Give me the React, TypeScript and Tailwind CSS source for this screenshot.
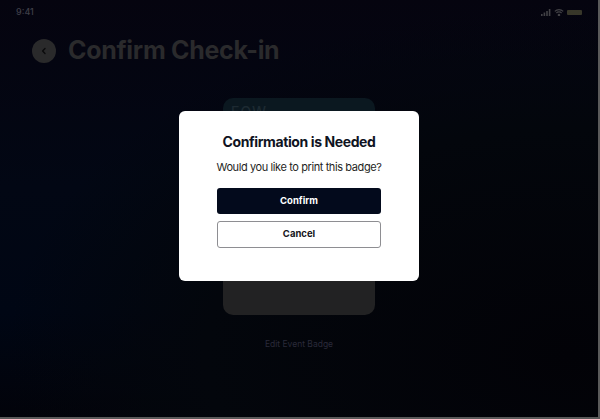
import React from "react";

const StatusBar = () => (
  <div className="flex h-[22px] items-center justify-between px-4 pt-[2px] text-[9px] text-[#3f3f48]">
    <span className="font-medium">9:41</span>
    <div className="flex items-center gap-[3px] opacity-60">
      <svg width="10" height="7" viewBox="0 0 10 7" fill="#6b6b6b">
        <rect x="0" y="5" width="1.6" height="2" />
        <rect x="2.6" y="3.5" width="1.6" height="3.5" />
        <rect x="5.2" y="2" width="1.6" height="5" />
        <rect x="7.8" y="0" width="1.6" height="7" />
      </svg>
      <svg width="10" height="7" viewBox="0 0 10 7" fill="none" stroke="#6b6b6b" strokeWidth="1.2">
        <path d="M0.8 2.4a6 6 0 0 1 8.4 0" />
        <path d="M2.4 4a3.6 3.6 0 0 1 5.2 0" />
        <circle cx="5" cy="6" r="0.7" fill="#6b6b6b" />
      </svg>
      <div className="h-[5px] w-[15px] rounded-[1px] bg-[#5b5a3c]" />
    </div>
  </div>
);

export default function App() {
  return (
    <div
      className="relative h-[419px] w-[600px] overflow-hidden border-r-2 border-b-2 border-[#5a5a5a] bg-[radial-gradient(ellipse_at_95%_85%,#020207_0%,#03060c_45%,transparent_70%),linear-gradient(180deg,#05040f_0%,#020714_45%,#000614_75%,#02030a_100%)]"
      style={{ fontFamily: "Inter, 'Noto Sans', sans-serif" }}
    >
      <StatusBar />

      {/* Header */}
      <div className="mt-[10px] flex items-center gap-[12px] pl-[32px]">
        <div className="flex h-[24px] w-[24px] items-center justify-center rounded-full bg-[#2a2a2b]">
          <svg width="8" height="8" viewBox="0 0 8 8" fill="none" stroke="#0a0a0c" strokeWidth="1.4" strokeLinecap="round" strokeLinejoin="round">
            <path d="M5 1.5 2.6 4 5 6.5" />
          </svg>
        </div>
        <h1 className="text-[25px] leading-[37px] font-bold tracking-[-0.3px] text-[#2a2a2c]">Confirm Check-in</h1>
      </div>

      {/* Badge preview */}
      <div className="mt-[29px] flex flex-col items-center">
        <div className="flex h-[217px] w-[152px] flex-col overflow-hidden rounded-[10px]">
          <div className="h-[90px] bg-[#0b1820] px-[8px] pt-[3px] text-[14px] font-medium tracking-[1px] text-[#1d2a32]">
            EOW
          </div>
          <div className="flex-1 bg-[#222223]" />
        </div>
        <span className="mt-[23px] text-[8.5px] leading-[13px] text-[#2a2a3a]">Edit Event Badge</span>
      </div>

      {/* Modal */}
      <div className="absolute inset-0 flex items-start justify-center pt-[111px]">
        <div className="flex h-[170px] w-[240px] flex-col items-center rounded-[6px] bg-white pt-[21px]">
          <h2 className="text-[14px] leading-[20px] font-bold tracking-[-0.4px] text-[#0f1322]">Confirmation is Needed</h2>
          <p className="mt-[7px] text-[11px] leading-[16px] tracking-[-0.4px] text-[#1f1f24]">Would you like to print this badge?</p>
          <button className="mt-[13px] h-[26px] w-[164px] rounded-[3px] bg-[#030a1c] text-[9.5px] font-bold text-white">
            Confirm
          </button>
          <button className="mt-[7px] h-[27px] w-[164px] rounded-[3px] border border-[#8e8e92] bg-white text-[9.5px] font-bold text-[#151520]">
            Cancel
          </button>
        </div>
      </div>
    </div>
  );
}
